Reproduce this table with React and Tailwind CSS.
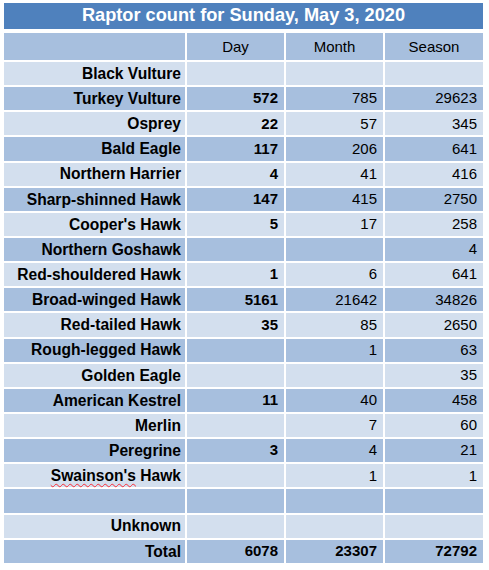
import React from 'react';

const rows = [
  { name: 'Black Vulture', day: '', month: '', season: '' },
  { name: 'Turkey Vulture', day: '572', month: '785', season: '29623' },
  { name: 'Osprey', day: '22', month: '57', season: '345' },
  { name: 'Bald Eagle', day: '117', month: '206', season: '641' },
  { name: 'Northern Harrier', day: '4', month: '41', season: '416' },
  { name: 'Sharp-shinned Hawk', day: '147', month: '415', season: '2750' },
  { name: "Cooper's Hawk", day: '5', month: '17', season: '258' },
  { name: 'Northern Goshawk', day: '', month: '', season: '4' },
  { name: 'Red-shouldered Hawk', day: '1', month: '6', season: '641' },
  { name: 'Broad-winged Hawk', day: '5161', month: '21642', season: '34826' },
  { name: 'Red-tailed Hawk', day: '35', month: '85', season: '2650' },
  { name: 'Rough-legged Hawk', day: '', month: '1', season: '63' },
  { name: 'Golden Eagle', day: '', month: '', season: '35' },
  { name: 'American Kestrel', day: '11', month: '40', season: '458' },
  { name: 'Merlin', day: '', month: '7', season: '60' },
  { name: 'Peregrine', day: '3', month: '4', season: '21' },
  { name: "Swainson's Hawk", day: '', month: '1', season: '1', squiggle: true },
  { name: '', day: '', month: '', season: '' },
  { name: 'Unknown', day: '', month: '', season: '' },
];

const Cell = ({ children, bg, bold, className = 'pr-[6px] text-[15px]' }) => (
  <div
    className={`${bg} h-[23.15px] flex items-center justify-end text-black ${
      bold ? 'font-bold' : ''
    } ${className}`}
  >
    {children}
  </div>
);

const nameCls = 'pr-[4px] text-[15.6px]';

export default function App() {
  return (
    <div
      className="bg-white w-[489px] h-[570px] pt-[3px] pl-[4px]"
      style={{ fontFamily: '"Liberation Sans", Arial, sans-serif' }}
    >
      <div className="w-[479px] h-[26px] bg-[#4f81bd] flex items-center justify-center text-white font-bold text-[18.2px]">
        Raptor count for Sunday, May 3, 2020
      </div>

      <div className="mt-[4px] w-[479px] grid grid-cols-[181px_97px_97px_98px] gap-[2px]">
        <div className="bg-[#a7bfde] h-[27px]" />
        {['Day', 'Month', 'Season'].map((h) => (
          <div
            key={h}
            className="bg-[#a7bfde] h-[27px] pt-[2px] flex items-center justify-center text-[15px] text-black"
          >
            {h}
          </div>
        ))}

        {rows.map((r, i) => {
          const bg = i % 2 === 0 ? 'bg-[#d3dfee]' : 'bg-[#a7bfde]';
          return (
            <React.Fragment key={i}>
              <Cell bg={bg} bold className={nameCls}>
                {r.squiggle ? (
                  <span>
                    <span className="underline decoration-wavy decoration-red-500 decoration-1 underline-offset-2">
                      Swainson's
                    </span>{' '}
                    Hawk
                  </span>
                ) : (
                  r.name
                )}
              </Cell>
              <Cell bg={bg} bold>
                {r.day}
              </Cell>
              <Cell bg={bg}>{r.month}</Cell>
              <Cell bg={bg}>{r.season}</Cell>
            </React.Fragment>
          );
        })}

        <Cell bg="bg-[#a7bfde]" bold className={nameCls}>
          Total
        </Cell>
        <Cell bg="bg-[#a7bfde]" bold>
          6078
        </Cell>
        <Cell bg="bg-[#a7bfde]" bold>
          23307
        </Cell>
        <Cell bg="bg-[#a7bfde]" bold>
          72792
        </Cell>
      </div>
    </div>
  );
}
